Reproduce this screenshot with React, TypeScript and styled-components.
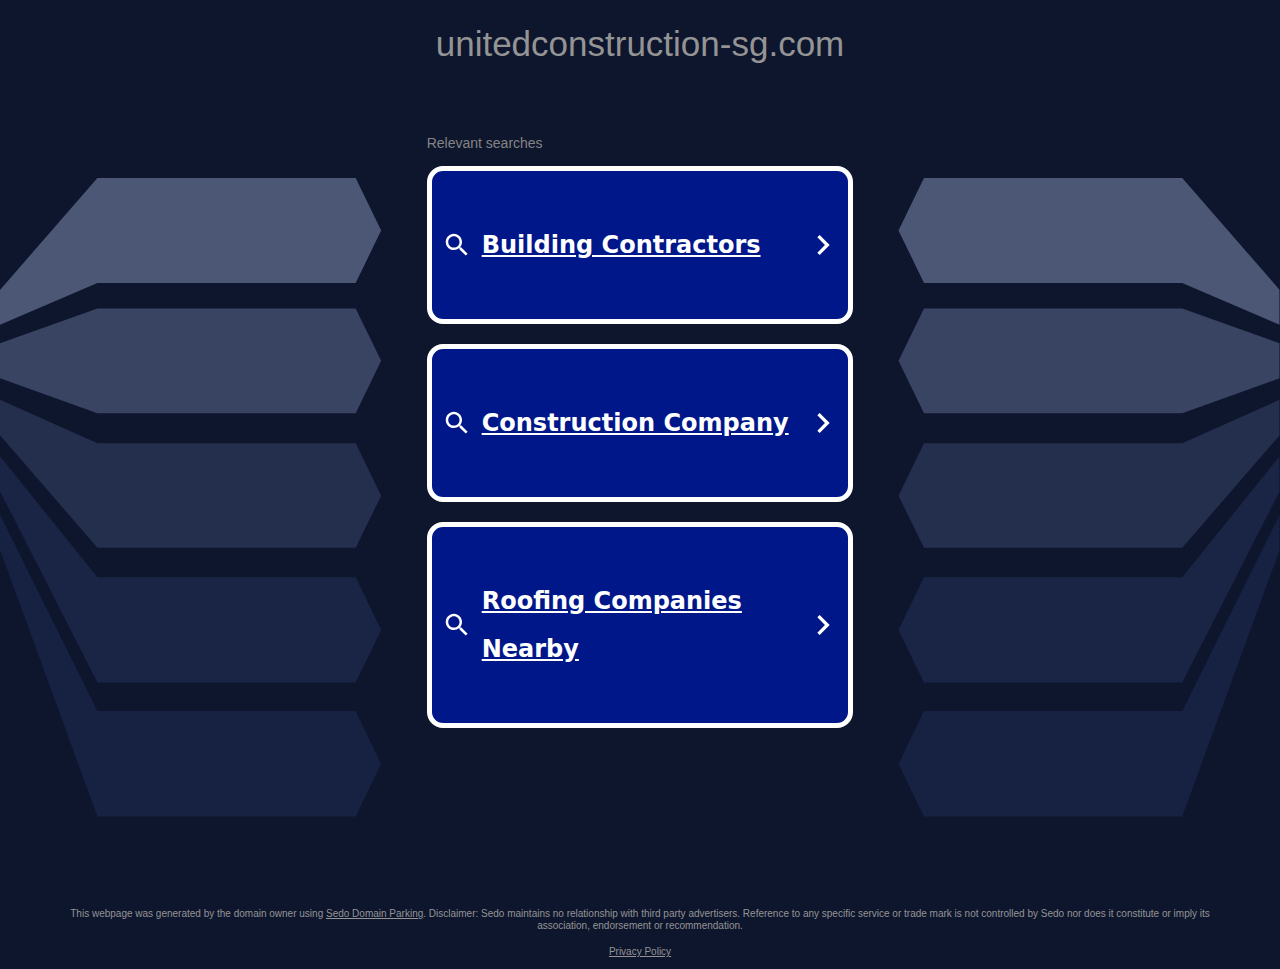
import React from 'react';
import styled, { createGlobalStyle } from 'styled-components';

const GlobalStyle = createGlobalStyle`
  * { box-sizing: border-box; }
  body {
    margin: 0;
    background: #0e162e;
    color: #949494;
    font-family: "Liberation Sans", Arial, sans-serif;
  }
`;

const Page = styled.div`
  min-height: 100vh;
  display: flex;
  flex-direction: column;
`;

const Header = styled.header`
  padding: 24px 16px 0;
  text-align: center;
`;

const DomainName = styled.h1`
  margin: 0;
  font-size: 35px;
  line-height: 40px;
  font-weight: 400;
`;

const Main = styled.main`
  flex: 1;
  display: grid;
  grid-template-columns: minmax(0, 1fr) calc(100% / 3) minmax(0, 1fr);
  column-gap: 45px;
  align-items: start;
  padding-top: 70px;
`;

const Ribbons = styled.svg<{ $mirrored?: boolean }>`
  display: block;
  width: 100%;
  margin-top: 44px;
  transform: ${({ $mirrored }) => ($mirrored ? 'scaleX(-1)' : 'none')};
`;

const Searches = styled.section`
  display: flex;
  flex-direction: column;
`;

const SearchesTitle = styled.h2`
  margin: 0 0 14px;
  font-size: 14px;
  line-height: 18px;
  font-weight: 400;
  color: #848484;
`;

const CardList = styled.ul`
  list-style: none;
  margin: 0;
  padding: 0;
  display: flex;
  flex-direction: column;
  gap: 20px;
`;

const Card = styled.a`
  display: flex;
  align-items: center;
  gap: 10px;
  padding: 50px 5px 50px 10px;
  border: 5px solid #fff;
  border-radius: 16px;
  background: #00178a;
  color: #fff;
  text-decoration: none;
`;

const CardLabel = styled.span`
  flex: 1;
  font-family: "DejaVu Sans", Verdana, sans-serif;
  font-size: 24px;
  line-height: 48px;
  font-weight: 700;
  text-decoration: underline;
`;

const Icon = styled.svg<{ $size: number }>`
  flex: none;
  width: ${({ $size }) => $size}px;
  height: ${({ $size }) => $size}px;
  fill: currentColor;
`;

const Footer = styled.footer`
  padding: 0 64px 11px;
  font-size: 10px;
  line-height: 12px;
  text-align: center;
`;

const FooterText = styled.p`
  margin: 0 0 14px;
`;

const FooterLink = styled.a`
  color: inherit;
`;

const ribbons = [
  { fill: '#4c5776', points: '0,112 97.5,0 356,0 381.5,52.5 356,105 97.5,105 0,147' },
  { fill: '#394362', points: '0,165.5 97.5,130.5 356,130.5 381.5,183 356,235.5 97.5,235.5 0,200.5' },
  { fill: '#242f4e', points: '0,222 97.5,265.5 356,265.5 381.5,318 356,370 97.5,370 0,257.5' },
  { fill: '#1a2545', points: '0,278.5 97.5,399.5 356,399.5 381.5,452.5 356,505 97.5,505 0,313.5' },
  { fill: '#172242', points: '0,337 97.5,533.5 356,533.5 381.5,586.5 356,639 97.5,639 0,372' },
];

const RibbonArt = ({ mirrored }: { mirrored?: boolean }) => (
  <Ribbons $mirrored={mirrored} viewBox="0 0 382 640" aria-hidden="true">
    {ribbons.map(({ fill, points }) => (
      <polygon key={fill} fill={fill} points={points} />
    ))}
  </Ribbons>
);

const searches = ['Building Contractors', 'Construction Company', 'Roofing Companies Nearby'];

export default function App() {
  return (
    <Page>
      <GlobalStyle />
      <Header>
        <DomainName>unitedconstruction-sg.com</DomainName>
      </Header>
      <Main>
        <RibbonArt />
        <Searches>
          <SearchesTitle>Relevant searches</SearchesTitle>
          <CardList>
            {searches.map((label) => (
              <li key={label}>
                <Card href="#">
                  <Icon $size={30} viewBox="0 0 24 24" aria-hidden="true">
                    <path d="M15.5 14h-.79l-.28-.27C15.41 12.59 16 11.11 16 9.5 16 5.91 13.09 3 9.5 3S3 5.91 3 9.5 5.91 16 9.5 16c1.61 0 3.09-.59 4.23-1.57l.27.28v.79l5 4.99L20.49 19l-4.99-5zm-6 0C7.01 14 5 11.99 5 9.5S7.01 5 9.5 5 14 7.01 14 9.5 11.99 14 9.5 14z" />
                  </Icon>
                  <CardLabel>{label}</CardLabel>
                  <Icon $size={40} viewBox="0 0 24 24" aria-hidden="true">
                    <path d="M10 6L8.59 7.41 13.17 12l-4.58 4.59L10 18l6-6z" />
                  </Icon>
                </Card>
              </li>
            ))}
          </CardList>
        </Searches>
        <RibbonArt mirrored />
      </Main>
      <Footer>
        <FooterText>
          This webpage was generated by the domain owner using <FooterLink href="#">Sedo Domain Parking</FooterLink>.
          Disclaimer: Sedo maintains no relationship with third party advertisers. Reference to any specific service or
          trade mark is not controlled by Sedo nor does it constitute or imply its association, endorsement or
          recommendation.
        </FooterText>
        <FooterLink href="#">Privacy Policy</FooterLink>
      </Footer>
    </Page>
  );
}
